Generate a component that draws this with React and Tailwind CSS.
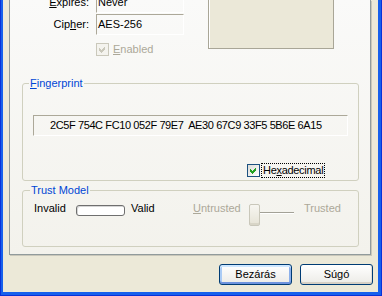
import React from "react"

function Field({ children, className = "" }) {
  return (
    <div className={`h-[21px] flex items-center pl-[1px] border border-t-[#ACA899] border-l-[#ACA899] border-b-white border-r-white whitespace-pre ${className}`}>
      {children}
    </div>
  )
}

function Tick({ color }) {
  return (
    <svg width="11" height="11" viewBox="0 0 11 11" shapeRendering="crispEdges">
      <polygon points="2,4 4,6 8,2 8,5 4,9 2,7" fill={color} />
    </svg>
  )
}

export default function App() {
  return (
    <div className="w-[382px] h-[296px] overflow-hidden bg-[#1660EC] border-l border-r border-b border-[#0831D9] pl-[2px] pr-[3px] pb-[3px] font-['Liberation_Sans',Arial,sans-serif] text-[11px] leading-[13px] text-black">
      <div className="h-full bg-[#ECE9D8] flex flex-col pl-[6px]">

        {/* tab page */}
        <div className="h-[255px] w-[362px] border-l border-r border-b border-[#919B9C] bg-gradient-to-b from-[#FAFAF9] to-[#F3F2EC] shadow-[1px_1px_0_#C9C7BA] overflow-hidden">

          {/* key info */}
          <div className="flex h-[85px] mt-[-8px]">
            <div className="flex flex-col gap-[1px]">
              <div className="flex items-center">
                <span className="w-[79px] text-right"><u>E</u>xpires:</span>
                <Field className="ml-[7px] w-[88px]">Never</Field>
              </div>
              <div className="flex items-center">
                <span className="w-[79px] text-right">Cip<u>h</u>er:</span>
                <Field className="ml-[7px] w-[88px]">AES-256</Field>
              </div>
              <div className="flex items-center ml-[86px] mt-[7px] gap-[4px]">
                <div className="w-[13px] h-[13px] border border-[#CAC8BB] bg-[#F4F3EE] flex items-center justify-center">
                  <Tick color="#CAC8BB" />
                </div>
                <span className="text-[#ACA899]"><u>E</u>nabled</span>
              </div>
            </div>
            <div className="ml-[24px] mt-[-3px] w-[126px] h-[60px] border border-[#A9A697] bg-[#EBE8D8] shadow-[inset_1px_1px_0_#FFFFFF]" />
          </div>

          {/* fingerprint */}
          <fieldset className="ml-[12px] w-[337px] border border-[#D0D0BF] rounded-[3px] pb-[2px]">
            <legend className="ml-[6px] px-[1px] text-[#0046D5]"><u>F</u>ingerprint</legend>
            <Field className="ml-[10px] mt-[25px] w-[315px] h-[20px] pl-[16px] tracking-[-0.4px]">
              2C5F 754C FC10 052F 79E7  AE30 67C9 33F5 5B6E 6A15
            </Field>
            <div className="flex items-center ml-[224px] mt-[27px] h-[15px]">
              <div className="w-[13px] h-[13px] border border-[#1C5180] bg-gradient-to-br from-[#DCDCD7] to-white flex items-center justify-center">
                <Tick color="#21A121" />
              </div>
              <span className="ml-[1px] h-[15px] px-[1px] border border-dotted border-black flex items-center tracking-[-0.3px]">
                He<u>x</u>adecimal
              </span>
            </div>
          </fieldset>

          {/* trust model */}
          <fieldset className="ml-[12px] mt-[3px] w-[337px] border border-[#D0D0BF] rounded-[3px] pb-[20px]">
            <legend className="ml-[7px] px-[1px] text-[#0046D5]">Trust Model</legend>
            <div className="flex items-start mt-[5px]">
              <span className="ml-[11px] w-[42px]">Invalid</span>
              <div className="mt-[3px] w-[49px] h-[11px] rounded-[3px] border border-[#6F6F6F] bg-white shadow-[inset_1px_1px_0_#D6D6D6]" />
              <span className="ml-[6px] w-[62px]">Valid</span>
              <span className="w-[56px] text-[#ACA899]"><u>U</u>ntrusted</span>
              <div className="mt-[2px] w-[11px] h-[22px] rounded-[2px] border border-[#C9C7BA] bg-gradient-to-b from-[#F7F6F1] to-[#E6E3D6] shadow-[inset_0_-2px_0_#D8D5C7]" />
              <div className="mt-[10px] w-[34px] border-t border-b border-t-[#A3A197] border-b-white" />
              <span className="ml-[10px] text-[#ACA899]">Trusted</span>
            </div>
          </fieldset>
        </div>

        {/* buttons */}
        <div className="flex justify-end gap-[8px] mt-[9px] pr-[5px]">
          <button className="w-[73px] h-[21px] rounded-[3px] border border-[#003C74] bg-gradient-to-b from-white to-[#ECEBE6] shadow-[inset_0_2px_0_#CEE7FF,inset_0_-2px_0_#6E93DE,inset_2px_0_0_#AACBF5,inset_-2px_0_0_#8CB0EA]">
            Bezárás
          </button>
          <button className="w-[73px] h-[21px] rounded-[3px] border border-[#003C74] bg-gradient-to-b from-white to-[#ECEBE6] shadow-[inset_0_-2px_0_#D6D0C5,inset_-1px_0_0_#E2DED6]">
            Súgó
          </button>
        </div>
      </div>
    </div>
  )
}
